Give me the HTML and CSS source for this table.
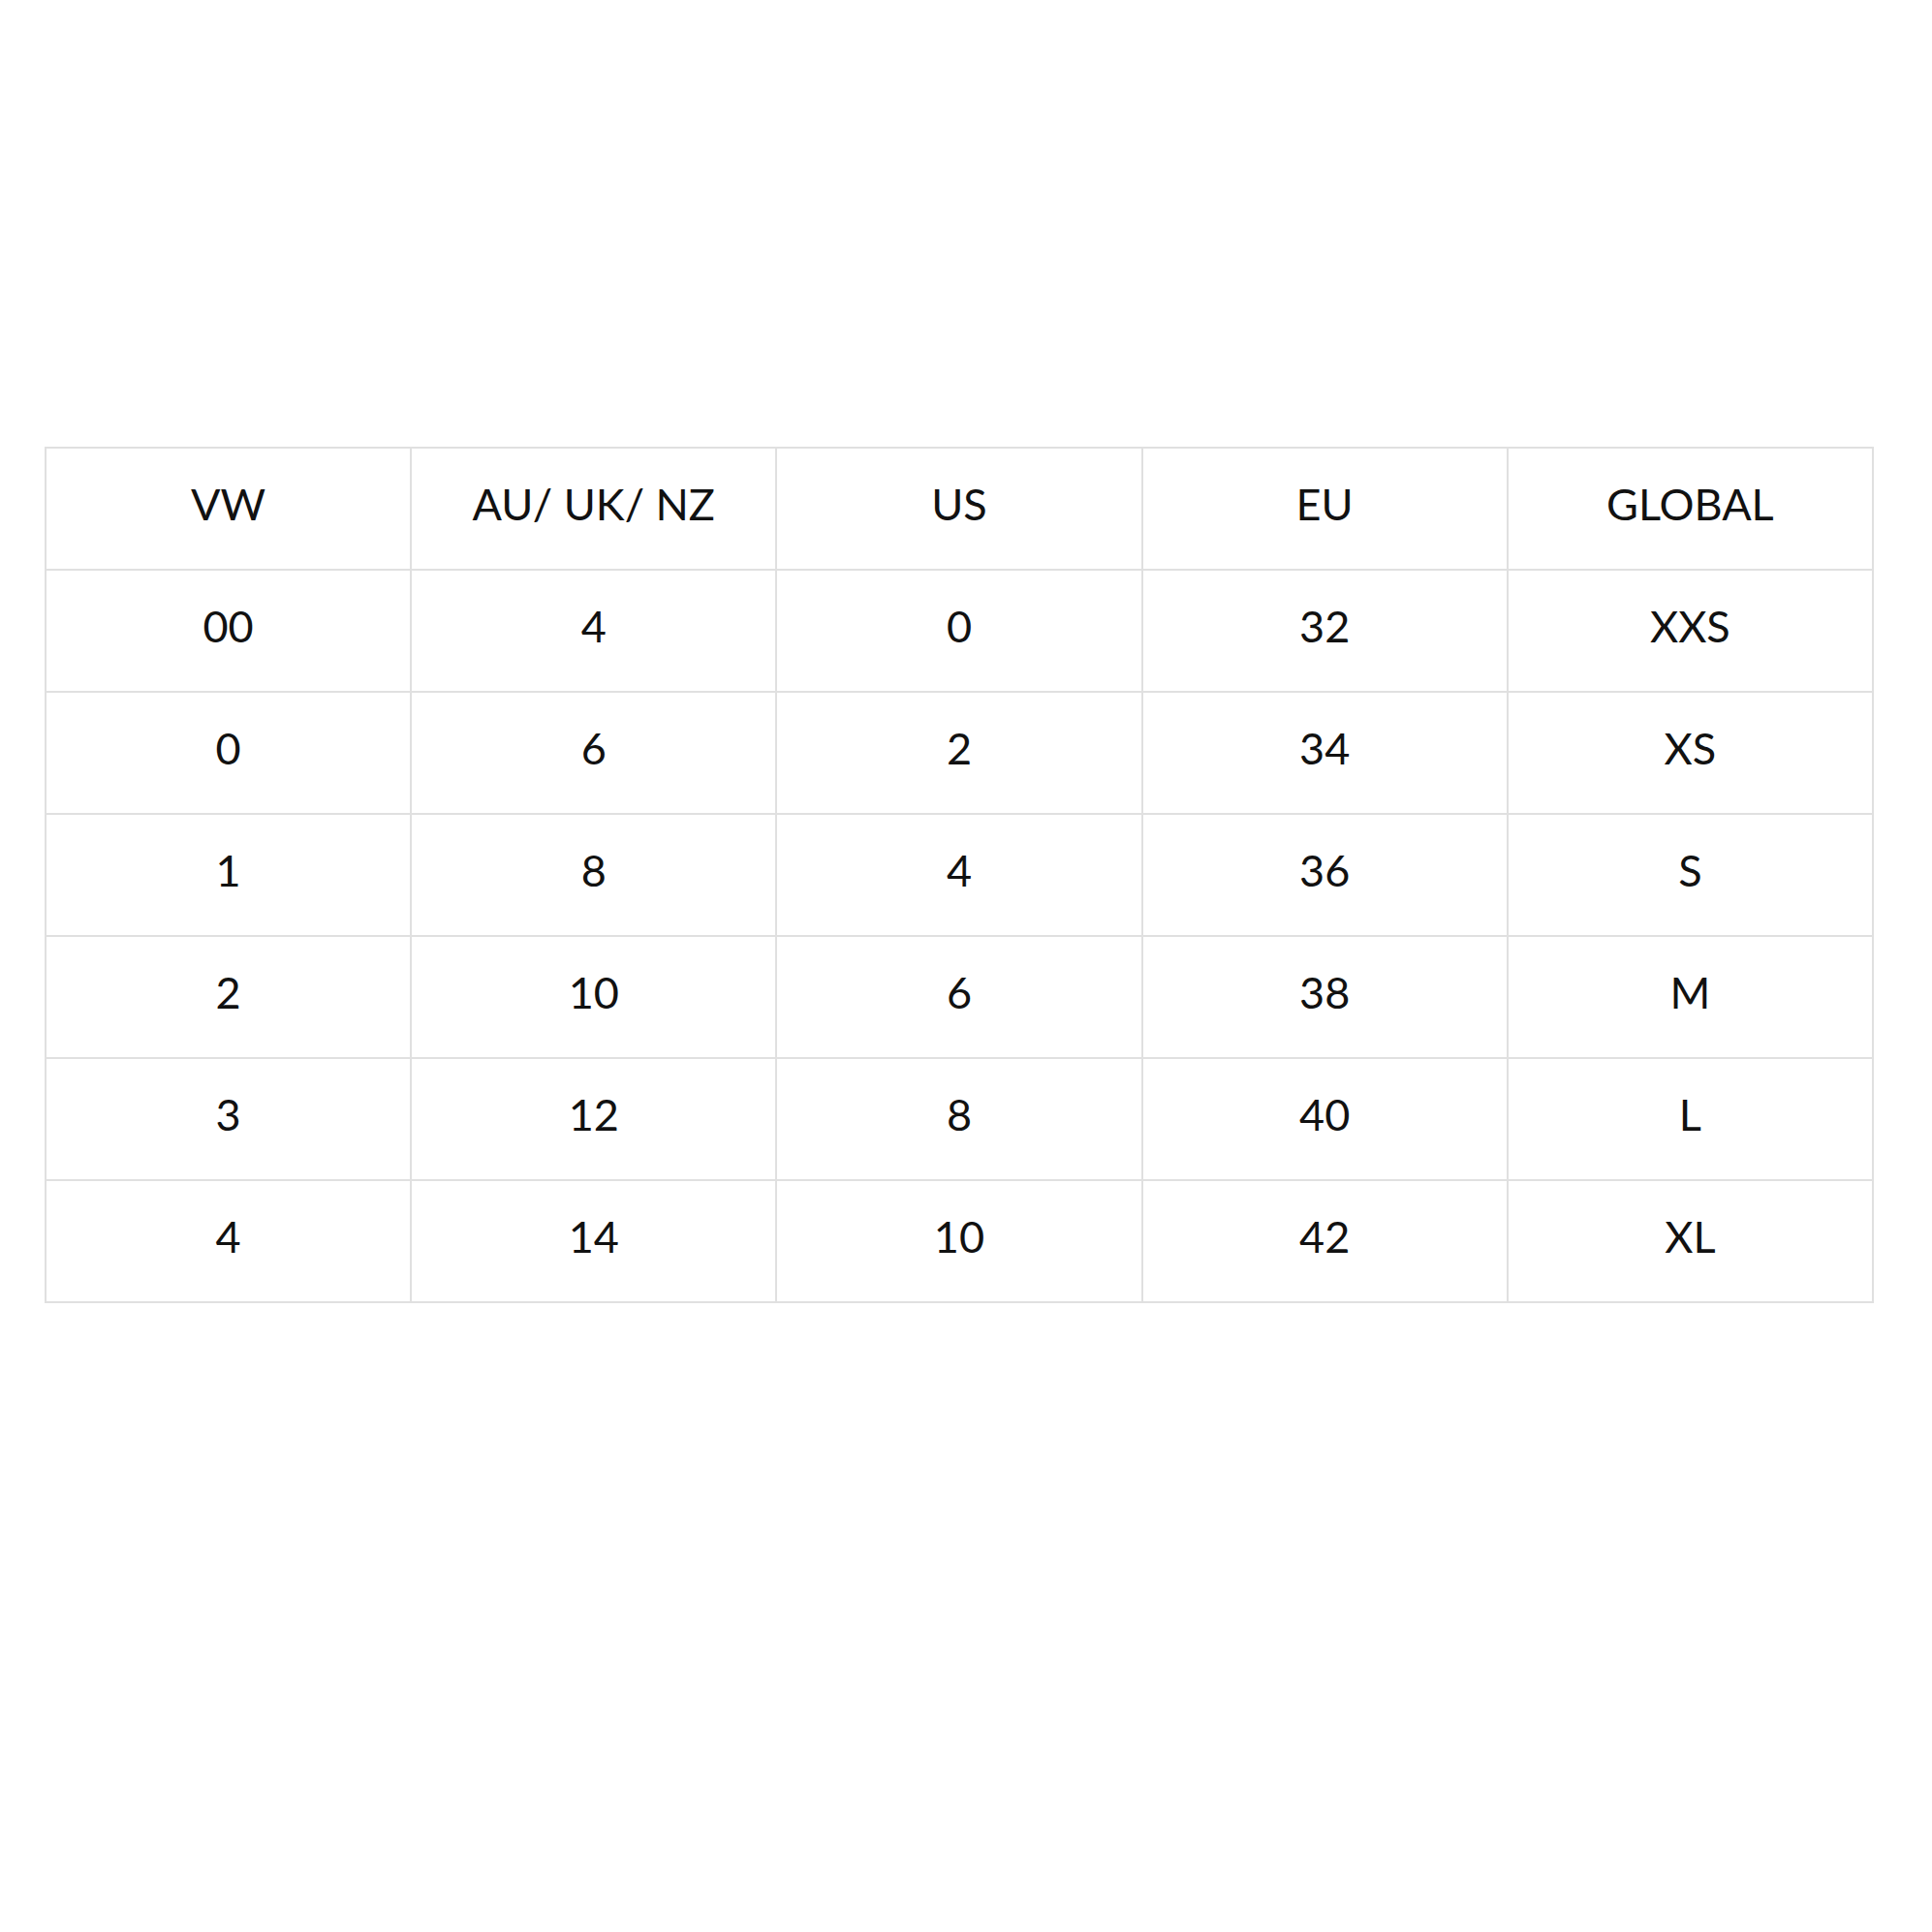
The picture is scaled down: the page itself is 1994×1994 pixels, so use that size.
FILE: index.html
```html
<!DOCTYPE html>
<html>
<head>
<meta charset="utf-8">
<link rel="stylesheet" href="styles.css">
</head>
<body>
<div class="page">
<table class="sizes">
<thead>
<tr><th>VW</th><th>AU/ UK/ NZ</th><th>US</th><th>EU</th><th>GLOBAL</th></tr>
</thead>
<tbody>
<tr><td>00</td><td>4</td><td>0</td><td>32</td><td>XXS</td></tr>
<tr><td>0</td><td>6</td><td>2</td><td>34</td><td>XS</td></tr>
<tr><td>1</td><td>8</td><td>4</td><td>36</td><td>S</td></tr>
<tr><td>2</td><td>10</td><td>6</td><td>38</td><td>M</td></tr>
<tr><td>3</td><td>12</td><td>8</td><td>40</td><td>L</td></tr>
<tr><td>4</td><td>14</td><td>10</td><td>42</td><td>XL</td></tr>
</tbody>
</table>
</div>
</body>
</html>
```

FILE: styles.css
```css
html, body {
  margin: 0;
  padding: 0;
  background: #ffffff;
}
.page {
  width: 1994px;
  height: 1994px;
  padding: 461px 0 0 46px;
  box-sizing: border-box;
}
.sizes {
  border-collapse: collapse;
  table-layout: fixed;
  width: 1888px;
  font-family: Lato, "Liberation Sans", sans-serif;
  font-size: 45px;
  color: #111111;
}
.sizes th, .sizes td {
  border: 2px solid #e0e0e0;
  height: 114px;
  padding: 0 0 10px 0;
  text-align: center;
  vertical-align: middle;
  font-weight: 400;
}
```
